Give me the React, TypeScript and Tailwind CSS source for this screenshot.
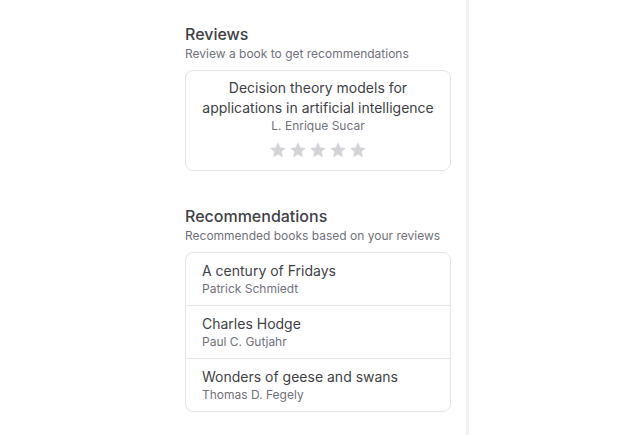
import React from "react";

const reviews = [
  {
    title: "Decision theory models for applications in artificial intelligence",
    author: "L. Enrique Sucar",
  },
];

const recommendations = [
  { title: "A century of Fridays", author: "Patrick Schmiedt" },
  { title: "Charles Hodge", author: "Paul C. Gutjahr" },
  { title: "Wonders of geese and swans", author: "Thomas D. Fegely" },
];

function Star() {
  return (
    <svg viewBox="0 0 24 24" className="w-[18px] h-[18px] fill-zinc-300">
      <path d="M12 1.8l3.1 6.9 7.4.7-5.6 5 1.7 7.4L12 18l-6.6 3.8 1.7-7.4-5.6-5 7.4-.7z" />
    </svg>
  );
}

export default function App() {
  return (
    <div className="min-h-screen w-full bg-white flex font-['Inter','Noto_Sans',sans-serif]">
      <div className="w-[469px] min-h-screen border-r-[3px] border-[#f0f0f3] pl-[185px] pt-[22px]">
        <div className="w-[266px]">
          <h2 className="text-base leading-6 font-medium text-zinc-700">Reviews</h2>
          <p className="text-xs leading-4 text-zinc-500">Review a book to get recommendations</p>

          {reviews.map((r) => (
            <div
              key={r.title}
              className="mt-2 border border-zinc-200 rounded-lg px-4 pt-[7px] pb-[11px] flex flex-col items-center text-center"
            >
              <div className="text-sm leading-5 text-zinc-700">{r.title}</div>
              <div className="text-xs leading-4 text-zinc-500">{r.author}</div>
              <div className="flex gap-0.5 mt-[7px]">
                <Star />
                <Star />
                <Star />
                <Star />
                <Star />
              </div>
            </div>
          ))}

          <h2 className="mt-[33px] text-base leading-6 font-medium text-zinc-700">Recommendations</h2>
          <p className="text-xs leading-4 text-zinc-500">Recommended books based on your reviews</p>

          <div className="mt-2 border border-zinc-200 rounded-lg divide-y divide-zinc-200">
            {recommendations.map((b) => (
              <div key={b.title} className="px-4 py-2">
                <div className="text-sm leading-5 text-zinc-700">{b.title}</div>
                <div className="text-xs leading-4 text-zinc-500">{b.author}</div>
              </div>
            ))}
          </div>
        </div>
      </div>
      <div className="flex-1" />
    </div>
  );
}
